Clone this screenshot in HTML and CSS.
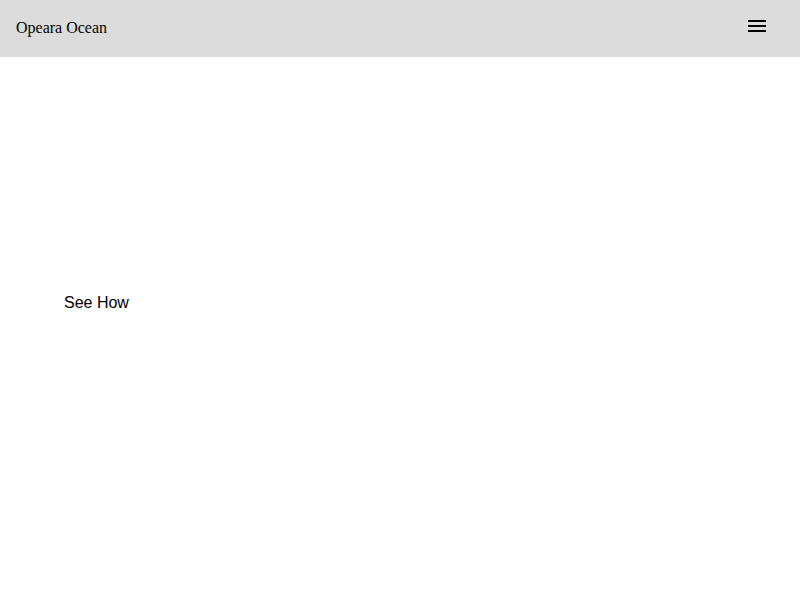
FILE: index.html
```html
<!DOCTYPE html>
<html lang="en">
<head>
  <meta charset="UTF-8" />
  <meta name="viewport" content="width=device-width, initial-scale=1.0"/>
  <title>Opeara Ocean</title>
  <link rel="stylesheet" href="styles.css">
</head>
<body>

  <!-- Top bar -->
  <header class="topbar">
    <span class="brand">Opeara Ocean</span>
    <button class="menu-btn" aria-label="Menu">
      <svg width="24" height="24" viewBox="0 0 24 24">
        <path d="M3 18h18v-2H3v2zm0-5h18v-2H3v2zm0-7v2h18V6H3z" fill="#000"/>
      </svg>
    </button>
  </header>

  <!-- Hero -->
  <section class="hero">
    <a class="see-how" href="#">See How</a>
  </section>

  <section class="filler"></section>

</body>
</html>
```

FILE: styles.css
```css
* {
  margin: 0;
  padding: 0;
  box-sizing: border-box;
}

body {
  background: #fff;
  color: #000;
}

.topbar {
  height: 57px;
  background: #dcdcdc;
  display: flex;
  align-items: center;
  justify-content: space-between;
  padding: 0 31px 0 16px;
}

.brand {
  font-family: 'Liberation Serif', serif;
  font-size: 16px;
  margin-top: -2px;
}

.menu-btn {
  background: transparent;
  border: none;
  display: flex;
  padding: 0;
  margin-top: -5px;
  cursor: pointer;
}

.hero {
  height: 492px;
  display: flex;
  align-items: center;
  padding-left: 64px;
}

.see-how {
  font-family: 'Liberation Sans', sans-serif;
  font-size: 16px;
  color: #000;
  text-decoration: none;
}

.filler {
  height: 2960px;
}
```
